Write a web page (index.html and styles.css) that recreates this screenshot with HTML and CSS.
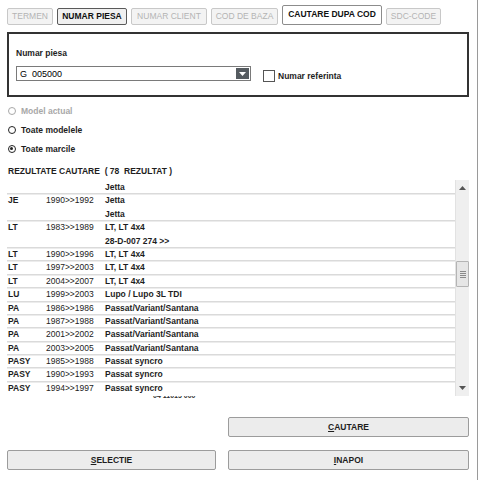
FILE: index.html
```html
<!DOCTYPE html>
<html>
<head>
<meta charset="utf-8">
<link rel="stylesheet" href="styles.css">
</head>
<body>
<div class="app">
  <div class="tabs">
    <div class="tab disabled w-termen">TERMEN</div>
    <div class="tab dark w-piesa">NUMAR PIESA</div>
    <div class="tab disabled w-client">NUMAR CLIENT</div>
    <div class="tab disabled w-baza">COD DE BAZA</div>
    <div class="tab active w-cod">CAUTARE DUPA COD</div>
    <div class="tab disabled w-sdc">SDC-CODE</div>
  </div>

  <div class="panel">
    <div class="label">Numar piesa</div>
    <div class="field-row">
      <div class="select">
        <span class="select-value">G&nbsp;&nbsp;005000</span>
        <span class="select-btn"><svg width="7" height="4" viewBox="0 0 7 4"><path d="M0 0H7L3.5 4Z" fill="#fff"/></svg></span>
      </div>
      <div class="check"><span class="box"></span><span>Numar referinta</span></div>
    </div>
  </div>

  <div class="radios">
    <div class="radio disabled"><span class="circle"></span>Model actual</div>
    <div class="radio"><span class="circle"></span>Toate modelele</div>
    <div class="radio"><span class="circle checked"></span>Toate marcile</div>
  </div>

  <div class="heading">REZULTATE CAUTARE&nbsp; ( 78&nbsp; REZULTAT )</div>

  <div class="list">
    <div class="rows">
      <div class="group first">
        <div class="row"><span class="c1"></span><span class="c2"></span><span class="c3">Jetta</span></div>
      </div>
      <div class="group">
        <div class="row"><span class="c1">JE</span><span class="c2">1990&gt;&gt;1992</span><span class="c3">Jetta</span></div>
        <div class="row"><span class="c1"></span><span class="c2"></span><span class="c3">Jetta</span></div>
      </div>
      <div class="group">
        <div class="row"><span class="c1">LT</span><span class="c2">1983&gt;&gt;1989</span><span class="c3">LT, LT 4x4</span></div>
        <div class="row"><span class="c1"></span><span class="c2"></span><span class="c3">28-D-007 274 &gt;&gt;</span></div>
      </div>
      <div class="group"><div class="row"><span class="c1">LT</span><span class="c2">1990&gt;&gt;1996</span><span class="c3">LT, LT 4x4</span></div></div>
      <div class="group"><div class="row"><span class="c1">LT</span><span class="c2">1997&gt;&gt;2003</span><span class="c3">LT, LT 4x4</span></div></div>
      <div class="group"><div class="row"><span class="c1">LT</span><span class="c2">2004&gt;&gt;2007</span><span class="c3">LT, LT 4x4</span></div></div>
      <div class="group"><div class="row"><span class="c1">LU</span><span class="c2">1999&gt;&gt;2003</span><span class="c3">Lupo / Lupo 3L TDI</span></div></div>
      <div class="group"><div class="row"><span class="c1">PA</span><span class="c2">1986&gt;&gt;1986</span><span class="c3">Passat/Variant/Santana</span></div></div>
      <div class="group"><div class="row"><span class="c1">PA</span><span class="c2">1987&gt;&gt;1988</span><span class="c3">Passat/Variant/Santana</span></div></div>
      <div class="group"><div class="row"><span class="c1">PA</span><span class="c2">2001&gt;&gt;2002</span><span class="c3">Passat/Variant/Santana</span></div></div>
      <div class="group"><div class="row"><span class="c1">PA</span><span class="c2">2003&gt;&gt;2005</span><span class="c3">Passat/Variant/Santana</span></div></div>
      <div class="group"><div class="row"><span class="c1">PASY</span><span class="c2">1985&gt;&gt;1988</span><span class="c3">Passat syncro</span></div></div>
      <div class="group"><div class="row"><span class="c1">PASY</span><span class="c2">1990&gt;&gt;1993</span><span class="c3">Passat syncro</span></div></div>
      <div class="group"><div class="row"><span class="c1">PASY</span><span class="c2">1994&gt;&gt;1997</span><span class="c3">Passat syncro</span></div></div>
    </div>
    <div class="scrollbar">
      <span class="arrow"><svg width="7" height="4" viewBox="0 0 7 4"><path d="M3.5 0L7 4H0Z" fill="#555"/></svg></span>
      <div class="track">
        <div class="spacer-top"></div>
        <div class="thumb"><span></span><span></span><span></span><span></span></div>
      </div>
      <span class="arrow"><svg width="7" height="4" viewBox="0 0 7 4"><path d="M0 0H7L3.5 4Z" fill="#555"/></svg></span>
    </div>
  </div>
  <div class="overflow-text"><span>04 11015 000</span></div>

  <div class="buttons">
    <div class="btn-row right"><div class="btn"><u>C</u>AUTARE</div></div>
    <div class="btn-row">
      <div class="btn left"><u>S</u>ELECTIE</div>
      <div class="btn"><u>I</u>NAPOI</div>
    </div>
  </div>
</div>
</body>
</html>
```

FILE: styles.css
```css
* { box-sizing: border-box; }
html, body { margin: 0; padding: 0; background: #fff; }
body {
  font-family: "Liberation Sans", Arial, sans-serif;
  font-size: 8.5px;
  font-weight: bold;
  color: #1e1e1e;
}
.app {
  width: 478px;
  height: 480px;
  border-right: 1px solid #9a9a9a;
  overflow: hidden;
}

/* tabs */
.tabs {
  display: flex;
  align-items: flex-end;
  gap: 4px;
  padding-left: 7px;
  height: 25px;
}
.tab {
  height: 17px;
  line-height: 15px;
  text-align: center;
  white-space: nowrap;
  border: 1px solid #c8c8c8;
  border-radius: 2px;
  background: #f3f3f3;
  color: #b4b4b4;
  font-weight: normal;
}
.w-termen { width: 46px; }
.w-piesa { width: 70px; }
.w-client { width: 76px; }
.w-baza { width: 67px; }
.w-cod { width: 100px; }
.w-sdc { width: 55px; }
.tab.dark {
  border-color: #5a5a5a;
  color: #111;
  font-weight: bold;
  background: #f0f0f0;
}
.tab.active {
  height: 20px;
  line-height: 17px;
  border-color: #8c8c8c;
  background: #fff;
  color: #111;
  font-weight: bold;
}

/* panel */
.panel {
  margin: 7px 0 0 7px;
  width: 462px;
  height: 65px;
  border: 2px solid #333;
  padding: 14px 7px 0;
}
.label { line-height: 11px; }
.field-row {
  display: flex;
  align-items: center;
  margin-top: 7px;
  height: 15px;
}
.select {
  width: 235px;
  height: 15px;
  border: 1px solid #7a7a7a;
  display: flex;
  align-items: center;
  background: #fff;
}
.select-value {
  flex: 1;
  padding-left: 3px;
  font-weight: normal;
  color: #000;
  font-size: 9px;
}
.select-btn {
  width: 15px;
  height: 13px;
  background: #555b60;
  display: flex;
  align-items: center;
  justify-content: center;
  border: 1px solid #fff;
}
.check {
  display: flex;
  align-items: center;
  margin-left: 12px;
  margin-top: 4px;
}
.check .box {
  width: 12px;
  height: 12px;
  border: 1px solid #555;
  background: #fff;
  margin-right: 3px;
}

/* radios */
.radios { margin-top: 4px; padding-left: 8px; }
.radio {
  display: flex;
  align-items: center;
  height: 19px;
}
.radio .circle {
  width: 8px;
  height: 8px;
  border: 1.5px solid #222;
  border-radius: 50%;
  margin-right: 5px;
  position: relative;
}
.radio .circle.checked::after {
  content: "";
  position: absolute;
  left: 1px; top: 1px;
  width: 3px; height: 3px;
  border-radius: 50%;
  background: #222;
}
.radio.disabled { color: #a8a8a8; }
.radio.disabled .circle { border-color: #a8a8a8; }

.heading {
  margin: 7px 0 0 8px;
  line-height: 13px;
  height: 15px;
}

/* list */
.list {
  margin-left: 7px;
  width: 462px;
  height: 216px;
  display: flex;
  overflow: hidden;
}
.rows { flex: 1; overflow: hidden; }
.group { box-shadow: inset 0 1.5px 0 #dadada; }
.group.first { box-shadow: none; }
.row {
  display: flex;
  height: 13.4px;
  line-height: 14px;
}
.row .c1 { width: 39px; padding-left: 1px; }
.row .c2 { width: 59px; font-weight: normal; color: #222; }
.row .c3 { flex: 1; }
.scrollbar {
  width: 14px;
  background: #efefef;
  border-left: 1px solid #e2e2e2;
  display: flex;
  flex-direction: column;
  align-items: center;
}
.scrollbar .arrow {
  height: 16px;
  display: flex;
  align-items: center;
  justify-content: center;
}
.track { flex: 1; width: 100%; }
.spacer-top { height: 65px; }
.thumb {
  height: 26px;
  background: #e6e6e6;
  border: 1px solid #b4b4b4;
  border-radius: 1px;
  display: flex;
  flex-direction: column;
  align-items: center;
  justify-content: center;
  gap: 1px;
}
.thumb span {
  width: 6px;
  height: 1px;
  background: #8a8a8a;
}
.overflow-text {
  height: 4px;
  overflow: hidden;
  padding-left: 153px;
  font-size: 7px;
  line-height: 4px;
  color: #333;
}
.overflow-text span { display: block; margin-top: -2px; }

/* buttons */
.buttons { margin-top: 17px; }
.btn-row {
  display: flex;
  gap: 12px;
  padding-left: 7px;
  margin-bottom: 13px;
}
.btn-row.right { padding-left: 228px; }
.btn {
  width: 241px;
  height: 20px;
  line-height: 18px;
  text-align: center;
  border: 1px solid #9c9c9c;
  border-radius: 2px;
  background: #ececec;
}
.btn.left { width: 209px; }
.btn u { text-decoration-thickness: 1px; text-underline-offset: 1px; }
```
